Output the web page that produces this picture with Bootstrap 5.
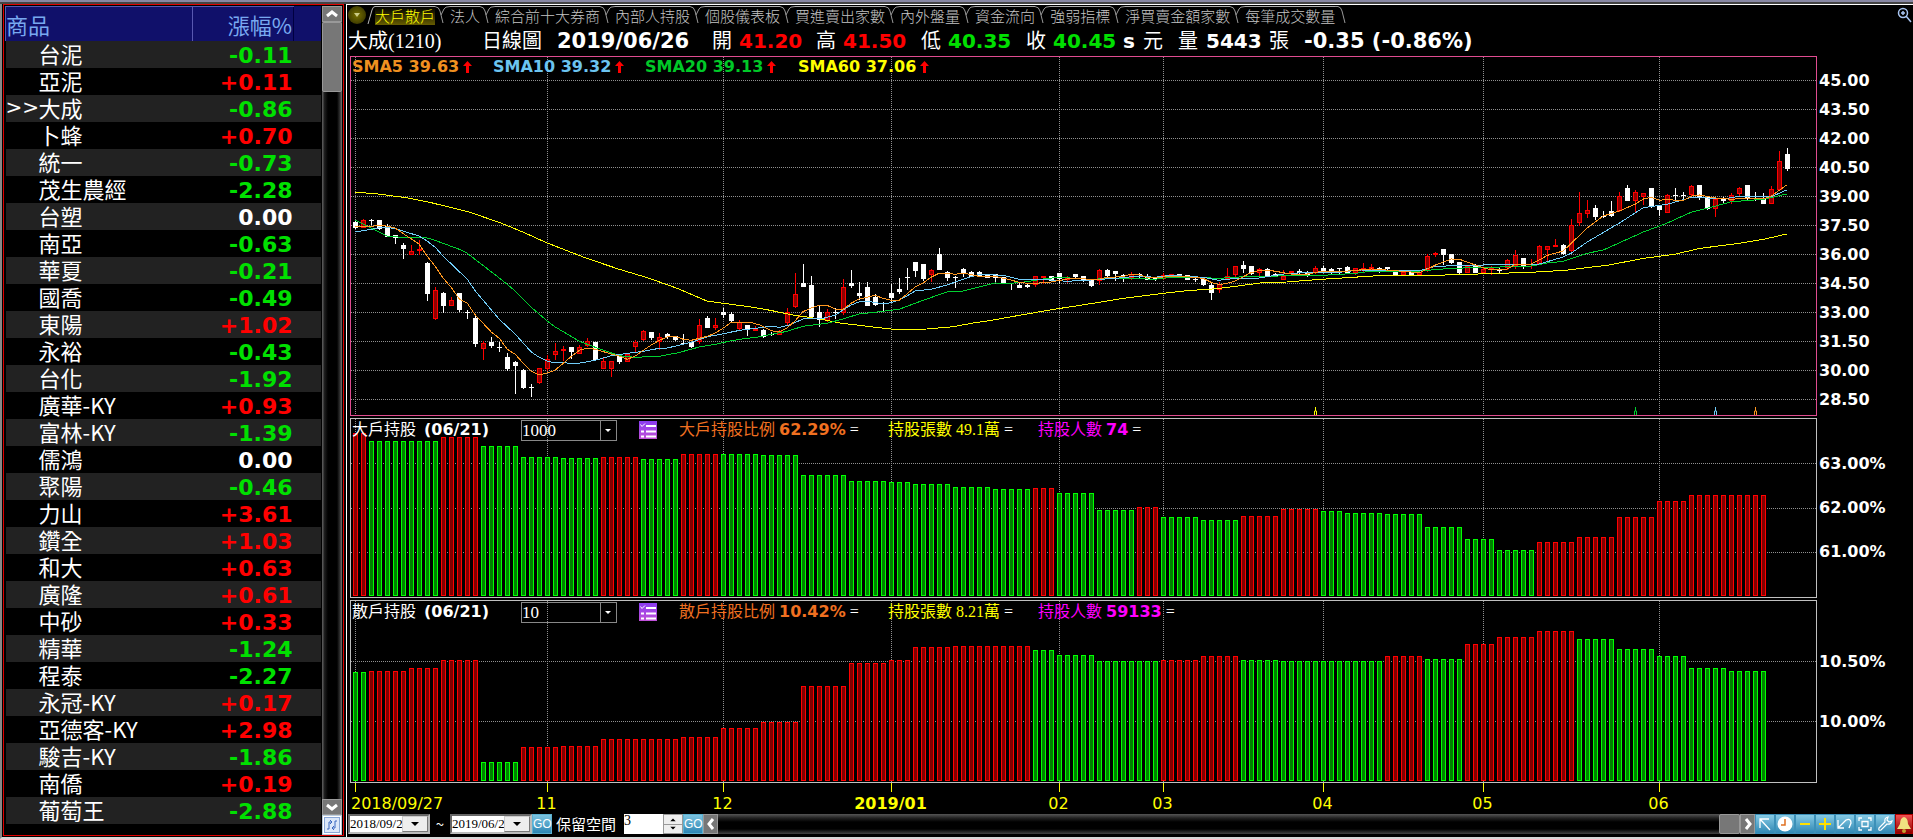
<!DOCTYPE html>
<html lang="zh-Hant">
<head>
<meta charset="utf-8">
<meta name="viewport" content="width=device-width, initial-scale=1">
<title>大成(1210) 日線圖</title>
<link href="https://cdn.jsdelivr.net/npm/bootstrap@5.3.0/dist/css/bootstrap.min.css" rel="stylesheet">
<style>
:root{--cjk:"Noto Sans CJK TC",sans-serif;--num:"DejaVu Sans","Noto Sans CJK TC",sans-serif;--song:"Liberation Serif","Noto Sans CJK TC",serif}
body{background:#000;color:#fff;font-family:var(--num);font-size:16px;line-height:20px;overflow:hidden}
button,select,input{border-radius:0;padding:0}
.frame-top{height:4px;background:#8888a4;border-bottom:2px solid #444}
.workspace{border-left:2px solid #888;border-bottom:2px solid #d8d8d8}
.watch{width:344px;background:#000;padding:0 2px 1px 1px}
.watch-box{border:1px solid #e00000;padding:1px 1px 0 1px}
.quotes{width:315px;border-collapse:collapse;table-layout:fixed}
.quotes th{height:34px;background:#10106a;color:#78a8f0;font:400 22px/32px var(--cjk);padding:0;border-top:1px solid #5858b0;border-left:1px solid #5858b0}
.quotes th.chg{text-align:right;padding:0 1px 0 0}
.quotes th.pad{border-left-color:#000040;border-top-color:#10106a}
.quotes td{height:27px;line-height:25px;padding:0;white-space:nowrap}
.quotes tbody tr:nth-child(odd){background:#222}
.quotes .stock{font:400 22px/25px var(--cjk);padding-bottom:2px}
.quotes .arrow{font:400 20px/25px "DejaVu Sans",sans-serif;padding-bottom:2px}
.quotes .val{font:700 22px/25px "DejaVu Sans",sans-serif;text-align:right;padding:2px 1px 0 0}
.up{color:#f00}.down{color:#00e000}
.vbar{width:20px;background:linear-gradient(90deg,#555 0 1px,#222 2px,#000 6px,#000 15px,#333 18px,#777)}
.vbar button,.hbar button{background:#777;border:1px solid #999;color:#fff;display:flex;align-items:center;justify-content:center}
.vbar .cap{height:16px}
.vbar .thumb{height:70px;background:#777;border:1px solid #999;border-radius:2px}
.main-pane{min-width:0;border-left:1px solid #fff;border-top:1px solid #fff;padding-left:3px}
.tabstrip{height:21px;white-space:nowrap;padding-top:1px;margin-left:-2px}
.tabstrip .tab-btn{background:none;border:0;border-top:1px solid #aaa;color:#c4c4c4;font:300 15px/18px var(--cjk);height:19px;white-space:nowrap}
.tabstrip .tab-btn.active{color:#ff0;background:linear-gradient(#000,#665c00)}
.tabstrip svg{flex:none;width:15px;height:19px}
.menu-dot{width:18px;height:18px;border-radius:50%;border:0;background:radial-gradient(#777000,#2a2800);color:#ccc}
.find{width:18px;height:18px;background:none;border:0}
.headline{display:grid;grid-template-columns:134px 75px 155px 27px 77px 27px 78px 27px 78px 27px 70px 20px 35px 28px 63px 35px auto;height:30px;align-items:center;white-space:nowrap;font:400 20px/28px var(--song);margin-left:-2px}
.headline b{font:700 20px/28px "DejaVu Sans",sans-serif}
.headline b.wide{font-size:21px}
.plot-row{display:grid;grid-template-columns:minmax(0,1fr) 96px}
.pane-gap{margin-top:2px}
.plot{display:block;width:100%}
.price{height:360px}.hold1{height:180px}.hold2{height:183px}
.over{position:absolute;left:2px;top:0;right:0;white-space:nowrap}
.sma{padding-top:1px}
.sma span{font-weight:700;line-height:20px}
.info{height:24px;font:400 16px/22px var(--song)}
.info b{font:700 16px/22px "DejaVu Sans",sans-serif}
.info .lbl{width:169px}.info .g1{width:209px}.info .g2{width:150px}
.list-ico{margin:0 22px}
.eq{color:#fff}
.combo{width:96px;height:21px;background:transparent;border:1px solid #888;color:#fff;font:400 17px/19px "Liberation Serif",serif;appearance:none}
.combo-wrap::after{content:"";position:absolute;right:16px;top:0;height:21px;border-left:1px solid #888}
.combo-wrap::before{content:"";position:absolute;right:6px;top:9px;border:3px solid transparent;border-top-color:#fff;border-bottom:0}
.scale{font-weight:700;padding-left:2px}
.scale span{display:block;height:29px;line-height:29px}
.price-scale{padding-top:10px}
.hold1-scale{padding-top:24px}.hold1-scale span{height:44px;line-height:44px}
.hold2-scale{padding-top:32px}.hold2-scale span{height:60px;line-height:60px}
.ticks{height:9px}
.dates{display:grid;height:22px;line-height:24px;color:#ff0;white-space:nowrap}
.dates span{justify-self:center}
.dates span:first-child{justify-self:start}
.toolbar{height:20px;font:400 15px/20px var(--cjk);white-space:nowrap;margin-left:-2px}
.tilde{width:20px}.keep-lbl{width:72px}
.date-pick{width:82px;height:20px;background:#fff;border:2px inset #bbb;appearance:none;font:400 13px/16px "Liberation Serif",serif;color:#000}
.date-wrap::after{content:"";position:absolute;right:2px;top:2px;width:26px;height:16px;background:#eee;border:1px outset #ccc}
.date-wrap::before{content:"";position:absolute;right:11px;top:8px;z-index:1;border:4px solid transparent;border-top-color:#000;border-bottom:0}
.go{width:20px;height:20px;border:1px solid #5ab0d0;background:linear-gradient(#7cc4e0,#2e86b4);color:#fff;font:400 12px/18px "Liberation Sans",sans-serif}
.space-input{width:59px;height:20px;border:0;font:400 14px/14px "Liberation Serif",serif;padding-bottom:6px}
.spin{position:absolute;right:0;top:0;width:20px;height:20px;background:linear-gradient(#eee 9px,#999 9px 10px,#eee 10px);border:1px solid #999}
.hbar{height:20px;background:linear-gradient(#555,#222 4px,#000 8px,#000 15px,#444)}
.hbar button{width:15px;height:20px}
.hbar .thumb{width:21px;height:20px;background:#777;border:1px solid #999;border-radius:2px}
.tool{width:20px;height:20px;border:1px solid #3c90b8;background:linear-gradient(#86cae4,#3088b4);display:flex;align-items:center;justify-content:center;flex:none}
.tool.alarm{background:linear-gradient(#f05050,#900000);border-color:#a00;width:18px}
.reload{width:20px;height:20px;flex:none}
.vbar .reload{background:#fff;border-color:#bcd}
</style>
</head>
<body>
<div class="d-flex flex-column min-vh-100">
<div class="frame-top"></div>
<div class="workspace d-flex flex-grow-1">

<aside class="watch flex-shrink-0">
 <div class="watch-box d-flex h-100">
  <div>
  <table class="quotes">
   <colgroup><col style="width:33px"><col style="width:154px"><col style="width:101px"><col style="width:27px"></colgroup>
   <thead><tr><th colspan="2">商品</th><th class="chg">漲幅%</th><th class="pad"></th></tr></thead>
   <tbody id="quotes"></tbody>
  </table>
  </div>
  <div class="vbar d-flex flex-column ms-auto">
   <button type="button" aria-label="上捲" class="cap"><svg width="12" height="8" fill="none" stroke="#fff" stroke-width="3"><path d="M1 6L6 2L11 6"/></svg></button>
   <div class="thumb"></div>
   <button type="button" aria-label="下捲" class="cap mt-auto"><svg width="12" height="8" fill="none" stroke="#fff" stroke-width="3"><path d="M1 2L6 6L11 2"/></svg></button>
   <button type="button" aria-label="重新整理" class="reload"><svg width="16" height="16"><rect x=".5" y=".5" width="15" height="15" fill="#dce8fa" stroke="#8aa8d8"/><path d="M3 12H5V5H8M6 3L8 5L6 7M13 4H11V11H8M10 9L8 11L10 13" fill="none" stroke="#3a68c0"/></svg></button>
  </div>
 </div>
</aside>

<main class="main-pane flex-grow-1">
 <div class="tabstrip d-flex align-items-start" id="tabs"></div>

 <div class="headline">
  <span>大成(1210)</span><span>日線圖</span><b class="wide">2019/06/26</b>
  <span>開</span><b class="up">41.20</b><span>高</span><b class="up">41.50</b>
  <span>低</span><b class="down">40.35</b><span>收</span><b class="down">40.45</b><b>s</b><span>元</span>
  <span>量</span><b>5443</b><span>張</span><b class="wide">-0.35 (-0.86%)</b>
 </div>

 <div class="plot-row">
  <div class="position-relative">
   <svg class="plot price" id="price" viewBox="350 56 1467 360" preserveAspectRatio="none"></svg>
   <div class="over sma d-flex" id="sma"></div>
  </div>
  <div class="scale price-scale"><span>45.00</span><span>43.50</span><span>42.00</span><span>40.50</span><span>39.00</span><span>37.50</span><span>36.00</span><span>34.50</span><span>33.00</span><span>31.50</span><span>30.00</span><span>28.50</span></div>
 </div>

 <div class="plot-row pane-gap">
  <div class="position-relative">
   <svg class="plot hold1" id="hold1" viewBox="350 418 1467 180" preserveAspectRatio="none"></svg>
   <div class="over info d-flex align-items-center">
    <label class="lbl" for="big">大戶持股 <b class="ms-1">(06/21)</b></label>
    <span class="combo-wrap position-relative d-flex"><select class="combo" id="big"><option>1000</option></select></span>
    <svg class="list-ico" width="18" height="18"><use href="#listicon"/></svg>
    <span class="g1" style="color:#f07020">大戶持股比例 <b>62.29%</b> <span class="eq">=</span></span>
    <span class="g2" style="color:#ff0">持股張數 49.1萬 <span class="eq">=</span></span>
    <span style="color:#f0f">持股人數 <b>74</b> <span class="eq">=</span></span>
   </div>
  </div>
  <div class="scale hold1-scale"><span>63.00%</span><span>62.00%</span><span>61.00%</span></div>
 </div>

 <div class="plot-row pane-gap">
  <div class="position-relative">
   <svg class="plot hold2" id="hold2" viewBox="350 600 1467 183" preserveAspectRatio="none"></svg>
   <div class="over info d-flex align-items-center">
    <label class="lbl" for="retail">散戶持股 <b class="ms-1">(06/21)</b></label>
    <span class="combo-wrap position-relative d-flex"><select class="combo" id="retail"><option>10</option></select></span>
    <svg class="list-ico" width="18" height="18"><use href="#listicon"/></svg>
    <span class="g1" style="color:#f07020">散戶持股比例 <b>10.42%</b> <span class="eq">=</span></span>
    <span class="g2" style="color:#ff0">持股張數 8.21萬 <span class="eq">=</span></span>
    <span style="color:#f0f">持股人數 <b>59133</b> <span class="eq">=</span></span>
   </div>
  </div>
  <div class="scale hold2-scale"><span>10.50%</span><span>10.00%</span></div>
 </div>

 <div class="plot-row">
  <div>
   <svg class="plot ticks" id="ticks" viewBox="350 783 1467 9" preserveAspectRatio="none"></svg>
   <div class="dates" id="dates"></div>
  </div>
 </div>

 <div class="toolbar d-flex align-items-center">
  <span class="date-wrap position-relative d-flex"><select class="date-pick" aria-label="開始日期"><option>2018/09/27</option></select></span>
  <span class="tilde text-center">~</span>
  <span class="date-wrap position-relative d-flex"><select class="date-pick" aria-label="結束日期"><option>2019/06/26</option></select></span>
  <button type="button" class="go">GO</button>
  <label for="keep" class="keep-lbl px-1">保留空間</label>
  <span class="position-relative d-flex"><input class="space-input" id="keep" value="3"><svg class="spin" viewBox="0 0 20 20"><path d="M7 7L10 4L13 7ZM7 13L10 16L13 13Z" fill="#000"/></svg></span>
  <button type="button" class="go">GO</button>
  <div class="hbar d-flex flex-grow-1">
   <button type="button" aria-label="左捲"><svg width="8" height="12" fill="none" stroke="#fff" stroke-width="3"><path d="M6 1L2 6L6 11"/></svg></button>
   <div class="thumb ms-auto"></div>
   <button type="button" aria-label="右捲"><svg width="8" height="12" fill="none" stroke="#fff" stroke-width="3"><path d="M2 1L6 6L2 11"/></svg></button>
  </div>
  <button type="button" class="tool" aria-label="指標"><svg width="14" height="14" fill="none" stroke="#fff" stroke-width="1.3"><path d="M2 11V2H11M2 2L12 13"/></svg></button>
  <button type="button" class="tool" aria-label="時間"><svg width="16" height="16"><circle cx="8" cy="8" r="7.5" fill="#fff"/><path d="M8 3V9H4" fill="none" stroke="#e07020" stroke-width="1.5"/></svg></button>
  <button type="button" class="tool" aria-label="縮小"><svg width="14" height="14"><path d="M2 7H12" stroke="#ffe000" stroke-width="2"/></svg></button>
  <button type="button" class="tool" aria-label="放大"><svg width="14" height="14"><path d="M1 7H13M7 1V13" stroke="#ffe000" stroke-width="2"/></svg></button>
  <button type="button" class="tool" aria-label="復原"><svg width="16" height="14" fill="none" stroke="#fff" stroke-width="1.3"><path d="M1 3V11H7M1 11L9 3Q14 1 14 6L12 11"/></svg></button>
  <button type="button" class="tool" aria-label="全圖"><svg width="14" height="14" fill="none" stroke="#fff" stroke-width="1.3"><path d="M1 4V1H4M10 1H13V4M13 10V13H10M4 13H1V10M4 4.500H10V9.500H4Z"/></svg></button>
  <button type="button" class="tool" aria-label="設定"><svg width="16" height="16" fill="none" stroke="#fff" stroke-width="1.2"><path d="M2 12L8 6Q7 2 11 1L10 4L12 6L15 5Q14 9 10 8L4 14Q1 15 2 12Z"/></svg></button>
  <button type="button" class="tool alarm" aria-label="警示"><svg width="16" height="17"><path d="M8 1Q12 2 12 8L15 13H1L4 8Q4 2 8 1Z" fill="#f0e080"/><circle cx="8" cy="15" r="2" fill="#c8a030"/></svg></button>
 </div>
</main>
</div>
</div>

<svg width="0" height="0" class="position-absolute"><defs>
 <linearGradient id="lg" x2="0" y2="1"><stop stop-color="#8a3cf0"/><stop offset="1" stop-color="#c050d8"/></linearGradient>
 <symbol id="listicon" viewBox="0 0 18 18"><rect width="18" height="18" fill="url(#lg)"/><path d="M7 5H17M7 10.500H17M7 15.500H17M2 10.500H5M2 15.500H5" stroke="#fff" stroke-width="2"/><path d="M1.500 3.500L3 5.500L6 2.500" fill="none" stroke="#fff"/></symbol>
</defs></svg>

<script src="https://cdn.jsdelivr.net/npm/bootstrap@5.3.0/dist/js/bootstrap.bundle.min.js"></script>
<script>
const $=id=>document.getElementById(id);
// watch list
const quotes='台泥 -0.11,亞泥 +0.11,大成 -0.86,卜蜂 +0.70,統一 -0.73,茂生農經 -2.28,台塑 0.00,南亞 -0.63,華夏 -0.21,國喬 -0.49,東陽 +1.02,永裕 -0.43,台化 -1.92,廣華-KY +0.93,富林-KY -1.39,儒鴻 0.00,聚陽 -0.46,力山 +3.61,鑽全 +1.03,和大 +0.63,廣隆 +0.61,中砂 +0.33,精華 -1.24,程泰 -2.27,永冠-KY +0.17,亞德客-KY +2.98,駿吉-KY -1.86,南僑 +0.19,葡萄王 -2.88';
$('quotes').innerHTML=quotes.split(',').map(q=>{const [n,v]=q.split(' ');return `<tr><td class="arrow">${n==='大成'?'&gt;&gt;':''}</td><td class="stock">${n}</td><td class="val ${v[0]==='+'?'up':v[0]==='-'?'down':''}">${v}</td><td></td></tr>`}).join('');
// tabs
const sepPath='<svg fill="none" stroke="#999"><path d="M0 .5Q4 1 5 5L8 17M6 9L9 3Q10 .5 15 .5"/></svg>';
$('tabs').innerHTML='<button type="button" class="menu-dot" aria-label="選單"><svg width="6" height="4" class="d-block mx-auto" style="width:6px;height:4px"><path d="M0 0H6L3 4Z" fill="#cc8"/></svg></button><svg style="width:9px" fill="none" stroke="#bbb"><path d="M2 18L6 4Q7 .5 9 .5"/></svg>'+
 '大戶散戶,法人,綜合前十大券商,內部人持股,個股儀表板,買進賣出家數,內外盤量,資金流向,強弱指標,淨買賣金額家數,每筆成交數量'.split(',').map((t,i)=>`<button type="button" class="tab-btn${i?'':' active'}">${t}</button>`).join(sepPath)+'<svg fill="none" stroke="#999"><path d="M0 .5H3Q6 1 7 5L10 17"/></svg><button type="button" class="find ms-auto" aria-label="放大檢視"><svg class="d-block" style="width:18px;height:18px" fill="none" stroke="#a8c4f0" stroke-width="1.5"><circle cx="8" cy="7" r="4.500"/><path d="M11 10L16 16M6 7H10M8 5V9"/></svg></button>';
$('sma').innerHTML=[['#f09020','SMA5 39.63'],['#6cc4f0','SMA10 39.32'],['#00c828','SMA20 39.13'],['#ff0','SMA60 37.06']].map(([c,t],i)=>`<span style="color:${c};width:${[141,152,153,150][i]}px">${t}<svg class="ms-1" width="9" height="13"><path d="M4.500 0L9 5H6V12H3V5H0Z" fill="#f00"/></svg></span>`).join('');

const X=i=>355+8*i, months=[0,24,46,67,88,101,121,141,163];
const rect=(x,y,w,h,a)=>`<rect x="${x}" y="${y}" width="${w}" height="${h}" ${a}/>`;
const grid=(ys,top,bot)=>ys.map(y=>`<path d="M351 ${y}.500H1816" stroke="#909090" stroke-dasharray="1 1"/>`).join('')+months.map(m=>`<path d="M${X(m)}.500 ${top}V${bot}" stroke="#909090" stroke-dasharray="1 1"/>`).join('');

// candles: colour + wick top, body top, body bottom, wick bottom, in thirds of a pixel from each block's base
const blocks=[[0,180,`W124,126,144,147 R118,120,144,144 W117,120,123,135 W120,120,148,151 W132,137,170,172 W165,166,174,192 W189,195,207,237 R195,213,225,225 R180,207,213,225 W246,249,342,363 R321,330,417,420 W336,339,378,399 R351,360,378,378 W339,339,390,396 W390,396,399,417 W402,414,492,501 R483,489,507,540 W471,486,498,504 W486,500,503,516 W519,531,567,573 W543,546,558,642 W567,570,624,627 W612,621,624,651 R564,564,609,612 R526,537,567,573 R489,513,525,540 R498,507,513,543 W501,501,516,537 R495,501,522,522 R474,483,498,501 W486,486,540,543 R534,543,567,567 R543,543,567,591 W525,525,546,552 R522,522,546,546 R480,486,501,516 R450,453,480,483 W456,456,474,480 R459,471,486,510 W459,462,471,477 W468,468,480,483 W462,489,492,495 W486,486,501,504 R417,435,486,492 W408,414,444,444 R414,435,444,450 W384,396,405,414 W396,402,423,426 R420,426,447,450`],
[49,220,`W315,315,330,348 R318,327,333,333 W327,330,351,354 W336,342,345,348 R330,333,345,345 R264,276,309,318 R159,222,261,264 W132,189,201,201 W168,195,291,291 W258,276,300,321 R267,276,303,306 W264,276,279,297 R177,201,279,285 W150,189,198,204 W186,219,228,240 W186,201,258,258 W222,231,255,258 W246,249,252,273 W192,219,234,246 W174,207,216,222 W144,171,174,210 W126,126,153,171 W132,132,177,183 R147,150,165,186 W84,102,150,150 W153,156,174,183 W168,171,174,204 W144,147,159,171 W153,156,171,171 W153,156,171,171 W162,165,174,174 W162,162,174,189 W171,171,189,189 W189,189,192,210 W189,195,204,204 W189,195,201,204 R168,168,195,201 R168,168,174,192 W168,168,183,183 W159,159,177,192 R168,174,180,189 W162,162,171,174 W168,168,180,186 W180,180,198,201 R147,150,183,195 W147,150,168,171 W153,153,162,183 W162,165,168,186 R156,162,174,180 W159,162,165,174 W162,168,180,180 W171,174,177,183 R159,165,177,180 R162,162,171,174 W162,162,165,171 W165,165,180,180 W171,177,180,186 W171,177,195,198 W189,195,219,240 R186,192,210,219 R144,168,177,180`],
[110,130,`R408,408,435,441 W393,405,417,429 W408,408,432,435 R414,417,429,438 W414,417,438,438 W429,432,438,441 R420,438,450,450 R423,423,429,438 W417,423,429,438 W423,429,438,441 R408,414,429,432 W408,414,423,429 W414,417,423,432 W414,414,417,432 W408,411,432,432 R414,414,429,435 R399,414,423,426 R402,411,417,423 W411,414,420,429 W411,411,417,420 W420,423,435,435 R420,426,435,435 W423,426,435,435 R423,426,435,438 R372,378,420,426 R366,369,375,381 W357,357,375,405 W372,372,399,402 W396,396,429,432 R408,408,429,429 W402,408,429,429 R411,417,429,432 R408,411,417,435 W411,417,423,429 R387,390,414,420 R360,375,408,417 W384,384,408,417 R387,402,405,417 R345,348,402,405 R348,348,360,393 R327,345,351,351 W342,345,372,375 R267,285,363,366 R186,249,279,288 R210,240,252,264 W225,234,261,270 W243,258,261,264 W213,243,258,261 R186,198,243,246 W165,174,213,213 R180,186,213,249 R189,189,201,225 W174,174,231,234 W225,228,240,258 R192,195,249,249 W174,195,198,210 W186,195,198,207 R165,168,195,198 W165,165,204,210 W201,201,237,240 R204,207,237,261 W201,204,213,219 R189,195,213,222 R171,174,192,201 W165,165,207,210 W186,204,207,213 W189,204,222,222 R168,177,222,222 R63,93,180,183 W54,72,117,123`]];
let candles='';
for(const [start,base,txt] of blocks) txt.split(' ').forEach((t,k)=>{
 const x=X(start+k),[a,b,c,d]=t.slice(1).split(',').map(v=>base+Math.round(v/3)),h=Math.max(1,c-b),red=t[0]==='R';
 candles+=rect(x,a,1,Math.max(1,d-a),`fill="${red?'#f00':'#fff'}"`);
 candles+=red?(h>2?rect(x-2,b,5,h,'fill="#f00"')+rect(x-1,b+1,3,h-2,'fill="#900000"'):rect(x-2,b,5,h,'fill="#f00"')):rect(x-2,b,5,h,'fill="#fff"');
});
// moving averages, one list per block (x, y in block units)
const org=[[345,180,3],[740,220,3],[1230,130,2.2958]];
const lines={
'#ffff00':['31,37 93,41 190,54 250,66 370,95 470,130 540,159 607,189 720,233 820,267 910,294 1000,326 1085,363 1180,376','0,256 75,268 160,285 240,297 300,309 400,321 480,330 560,327 640,320 700,309 760,300 860,282 954,266 1040,253 1150,235 1270,220 1340,212 1430,206','0,471 70,459 130,456 210,448 340,437 470,436 570,432 690,427 770,421 870,405 950,385 1020,373 1080,355 1170,340 1225,328 1278,312'],
'#00d030':['31,121 80,145 125,168 180,173 240,172 270,181 343,208 367,220 463,294 511,333 559,382 607,423 631,441 703,484 751,502 823,527 871,532 943,529 1000,518 1063,501 1111,493 1159,482','0,358 60,350 141,334 189,319 261,310 309,297 357,282 405,277 477,268 549,241 621,216 669,213 717,201 765,189 813,190 861,185 909,177 957,172 1053,178 1149,174 1245,178 1293,172 1389,172 1437,176','0,442 67,439 214,436 290,430 325,423 435,423 508,415 600,412 692,408 729,399 765,394 820,370 857,360 949,306 1004,279 1060,246 1115,228 1151,215 1225,208 1278,192'],
'#70ccf8':['31,156 80,148 110,142 150,145 190,158 222,168 246,183 270,201 294,228 367,298 391,333 463,418 511,463 559,516 583,532 607,544 631,548 700,550 751,541 799,527 847,520 895,514 943,505 967,504 1039,487 1087,470 1111,466','0,331 60,323 93,319 120,322 150,314 189,297 250,295 285,286 309,270 333,255 357,246 381,243 429,252 453,248 477,240 501,228 525,213 573,208 621,195 669,178 717,163 790,166 837,178 933,180 981,184 1053,180 1149,173 1197,168 1245,172 1293,166 1389,172 1437,181','0,447 67,444 123,432 178,427 250,427 300,420 435,422 472,409 582,405 692,404 710,402 765,381 784,369 820,336 894,279 949,233 1004,223 1060,202 1096,204 1133,207 1170,199 1243,200 1278,180'],
'#ff9820':['31,139 80,139 110,135 150,144 190,171 222,192 246,228 270,258 294,294 320,324 343,357 367,370 391,405 439,456 463,475 487,508 511,523 535,550 559,574 583,585 607,579 631,570 655,550 679,529 703,511 727,504 751,508 799,522 823,528 847,538 871,528 895,511 919,495 943,481 967,471 991,469 1015,478 1039,481 1063,475 1087,469 1111,459 1135,444 1159,427','0,307 30,307 60,315 93,332 117,336 141,324 165,303 189,275 213,264 237,256 261,256 285,267 309,268 333,250 357,237 381,232 405,226 429,235 453,241 477,241 501,222 525,201 549,189 573,172 597,160 621,159 645,163 669,159 717,169 765,169 813,180 837,187 861,190 885,190 933,186 981,177 1029,175 1053,180 1077,178 1101,172 1149,170 1173,162 1197,164 1221,172 1245,174 1293,168 1341,170 1389,175 1413,187 1437,194 1461,190','12,453 45,430 70,420 86,420 141,432 178,432 214,423 270,423 325,417 380,422 435,428 453,417 472,405 508,387 527,388 563,405 582,414 600,419 637,417 655,403 692,402 710,390 729,376 765,363 784,339 820,294 857,258 894,243 931,222 949,207 967,202 986,211 1004,208 1023,211 1041,211 1060,198 1078,195 1115,204 1151,208 1188,204 1225,207 1243,198 1262,180 1278,165']};
const ma=Object.entries(lines).map(([c,ls])=>`<polyline fill="none" stroke="${c}" shape-rendering="crispEdges" points="${ls.map((l,k)=>l.split(' ').map(p=>{const [x,y]=p.split(',');return (org[k][0]+x/org[k][2]).toFixed(1)+','+(org[k][1]+y/3).toFixed(1)}).join(' ')).join(' ')}"/>`).join('');
const marks=[[120,'#ff0'],[160,'#00d030'],[170,'#70ccf8'],[175,'#ff9820']].map(([i,c])=>`<path d="M${X(i)-.5} 415V411H${X(i)+.5}V407V411H${X(i)+1.5}V415" fill="none" stroke="${c}"/>`).join('');
$('price').innerHTML=grid([80,109,138,167,196,225,254,283,312,341,370,399],57,415)+candles+ma+marks+rect(350.5,56.5,1466,359,'fill="none" stroke="#e04c90"');

// holding bars: colour, last index, top
function bars(list,bot){let i=0,s='';for(const [c,last,y] of list)for(;i<=last;i++)s+=rect(X(i)-1.5,y+.5,4,bot-y-1,c==='R'?'fill="#800000" stroke="#f00"':'fill="#008000" stroke="#0f0"');return s}
$('hold1').innerHTML=grid([463,508,552],419,597)+bars([['R',1,433],['G',10,441],['R',15,437],['G',20,446],['G',25,457],['G',30,458],['R',35,457],['G',40,459],['R',45,454],['G',50,454],['G',55,455],['G',61,475],['G',66,481],['G',69,482],['G',74,484],['G',79,487],['G',84,489],['R',87,488],['G',92,493],['G',97,510],['R',100,507],['G',105,517],['G',110,520],['R',115,516],['R',120,509],['G',123,511],['G',128,513],['G',133,514],['G',138,527],['G',142,539],['G',147,550],['R',152,542],['R',157,537],['R',162,517],['R',166,501],['R',176,495]],596)+rect(350.5,418.5,1466,179,'fill="none" stroke="#c0c0c0"');
$('hold2').innerHTML=grid([661,721],601,782)+bars([['G',1,672],['R',6,671],['R',10,668],['R',15,660],['G',20,762],['R',25,747],['R',30,746],['R',40,739],['R',45,737],['R',50,728],['R',55,722],['R',61,686],['R',66,663],['R',69,660],['R',74,647],['R',84,646],['G',87,650],['G',92,655],['G',100,661],['R',105,660],['R',110,656],['G',115,660],['G',128,661],['R',133,656],['G',138,659],['R',142,644],['R',147,637],['R',152,631],['G',157,639],['G',162,649],['G',166,656],['G',171,668],['G',176,671]],781)+rect(350.5,600.5,1466,182,'fill="none" stroke="#c0c0c0"');
$('ticks').innerHTML=months.map(m=>`<path d="M${X(m)}.500 0V900" stroke="#ff0"/>`).join('');
// date labels, each centred on its month's first bar
const names=['2018/09/27','11','12','2019/01','02','03','04','05','06'];
$('dates').innerHTML=names.map((n,i)=>`<span style="grid-row:1;grid-column:${i?X(months[i])-350-45:2} / span ${i?91:100}" class="${i===3?'fw-bold':''}">${n}</span>`).join('');
$('dates').style.gridTemplateColumns='repeat(1467,minmax(0,1fr))';
</script>
</body>
</html>
